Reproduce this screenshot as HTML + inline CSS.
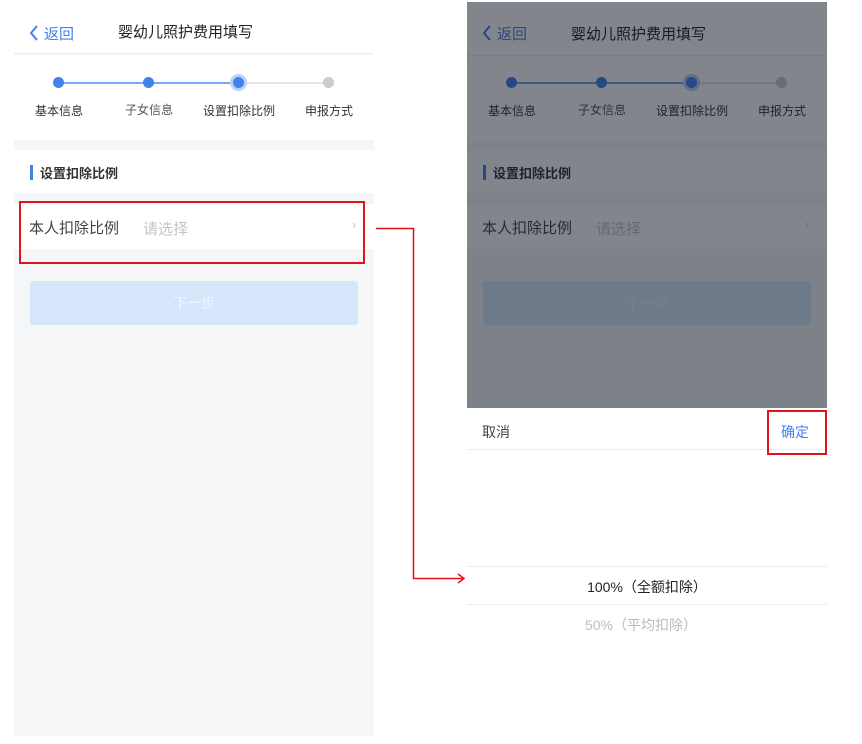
<!DOCTYPE html>
<html><head><meta charset="utf-8"><style>
*{margin:0;padding:0;box-sizing:border-box}
body{width:862px;height:744px;background:#fff;position:relative;overflow:hidden;font-family:"Liberation Sans","Noto Sans CJK SC",sans-serif;}
.scr{position:absolute;width:360px;background:#f5f6f8;overflow:hidden}
.a{position:absolute}
.hdr{left:0;top:0;width:360px;height:54px;background:#fff;border-bottom:1px solid #ececec}
.back{left:30px;top:23px;font-size:15px;color:#3f82ee}
.title{left:104px;top:21px;font-size:15px;color:#222}
.steps{left:0;top:55px;width:360px;height:85px;background:#fff}
.dot{width:11px;height:11px;border-radius:50%;background:#3f82ee}
.lab{font-size:12px;color:#333;width:90px;text-align:center}
</style></head><body>

<div class="scr" style="left:14px;top:0;height:736px">
 <div class="a hdr"></div>
 <svg class="a" style="left:14px;top:24px" width="12" height="18"><path d="M9 2L3 9L9 16" fill="none" stroke="#3f82ee" stroke-width="2"/></svg>
 <div class="a back">返回</div>
 <div class="a title">婴幼儿照护费用填写</div>
 <div class="a steps"></div>
 <div class="a" style="left:45px;top:82px;width:90px;height:2px;background:#7aa8f2"></div>
 <div class="a" style="left:135px;top:82px;width:90px;height:2px;background:#7aa8f2"></div>
 <div class="a" style="left:225px;top:82px;width:90px;height:2px;background:#e4e4e4"></div>
 <div class="a dot" style="left:39px;top:77px"></div>
 <div class="a dot" style="left:129px;top:77px"></div>
 <div class="a dot" style="left:216px;top:74px;width:17px;height:17px;border:3px solid #b9d2f8"></div>
 <div class="a dot" style="left:309px;top:77px;background:#ccc"></div>
 <div class="a lab" style="left:0px;top:102px">基本信息</div>
 <div class="a lab" style="left:90px;top:101px;color:#555">子女信息</div>
 <div class="a lab" style="left:180px;top:102px">设置扣除比例</div>
 <div class="a lab" style="left:270px;top:102px">申报方式</div>
 <div class="a" style="left:0;top:150px;width:360px;height:43px;background:#fff"></div>
 <div class="a" style="left:16px;top:165px;width:3px;height:15px;background:#3f82ee"></div>
 <div class="a" style="left:26px;top:163px;font-size:13px;font-weight:bold;color:#333">设置扣除比例</div>
 <div class="a" style="left:0;top:204px;width:360px;height:45px;background:#fff"></div>
 <div class="a" style="left:15px;top:217px;font-size:15px;color:#444">本人扣除比例</div>
 <div class="a" style="left:129px;top:218px;font-size:15px;color:#c5c5c5">请选择</div>
 <div class="a" style="left:338px;top:217px;font-size:13px;color:#ccc">&#8250;</div>
 <div class="a" style="left:16px;top:281px;width:328px;height:44px;background:#d6e7fb;border-radius:3px;color:#eef5ff;font-size:14px;text-align:center;line-height:44px">下一步</div>
</div>

<div class="scr" style="left:467px;top:2px;height:718px">
 <div class="a hdr"></div>
 <svg class="a" style="left:14px;top:22px" width="12" height="18"><path d="M9 2L3 9L9 16" fill="none" stroke="#3f82ee" stroke-width="2"/></svg>
 <div class="a back" style="top:21px">返回</div>
 <div class="a title">婴幼儿照护费用填写</div>
 <div class="a steps"></div>
 <div class="a" style="left:45px;top:80px;width:90px;height:2px;background:#7aa8f2"></div>
 <div class="a" style="left:135px;top:80px;width:90px;height:2px;background:#7aa8f2"></div>
 <div class="a" style="left:225px;top:80px;width:90px;height:2px;background:#e4e4e4"></div>
 <div class="a dot" style="left:39px;top:75px"></div>
 <div class="a dot" style="left:129px;top:75px"></div>
 <div class="a dot" style="left:216px;top:72px;width:17px;height:17px;border:3px solid #b9d2f8"></div>
 <div class="a dot" style="left:309px;top:75px;background:#ccc"></div>
 <div class="a lab" style="left:0px;top:100px">基本信息</div>
 <div class="a lab" style="left:90px;top:99px;color:#555">子女信息</div>
 <div class="a lab" style="left:180px;top:100px">设置扣除比例</div>
 <div class="a lab" style="left:270px;top:100px">申报方式</div>
 <div class="a" style="left:0;top:148px;width:360px;height:43px;background:#fff"></div>
 <div class="a" style="left:16px;top:163px;width:3px;height:15px;background:#3f82ee"></div>
 <div class="a" style="left:26px;top:161px;font-size:13px;font-weight:bold;color:#333">设置扣除比例</div>
 <div class="a" style="left:0;top:202px;width:360px;height:45px;background:#fff"></div>
 <div class="a" style="left:15px;top:215px;font-size:15px;color:#444">本人扣除比例</div>
 <div class="a" style="left:129px;top:216px;font-size:15px;color:#c5c5c5">请选择</div>
 <div class="a" style="left:338px;top:215px;font-size:13px;color:#ccc">&#8250;</div>
 <div class="a" style="left:16px;top:279px;width:328px;height:44px;background:#d6e7fb;border-radius:3px;color:#eef5ff;font-size:14px;text-align:center;line-height:44px">下一步</div>
 <div class="a" style="left:0;top:0;width:360px;height:406px;background:rgba(15,22,32,0.52)"></div>
 <div class="a" style="left:0;top:406px;width:360px;height:312px;background:#fff"></div>
 <div class="a" style="left:0;top:447px;width:360px;height:1px;background:#eee"></div>
 <div class="a" style="left:15px;top:420px;font-size:14px;color:#444">取消</div>
 <div class="a" style="left:314px;top:420px;font-size:14px;color:#3f82ee">确定</div>
 <div class="a" style="left:0;top:564px;width:360px;height:1px;background:#eee"></div>
 <div class="a" style="left:0;top:602px;width:360px;height:1px;background:#eee"></div>
 <div class="a" style="left:0;top:575px;width:360px;text-align:center;font-size:14px;color:#222">100%（全额扣除）</div>
 <div class="a" style="left:-6px;top:613px;width:360px;text-align:center;font-size:14px;color:#bbb">50%（平均扣除）</div>
</div>

<div class="a" style="left:19px;top:201px;width:346px;height:63px;border:2px solid #e0121b"></div>
<div class="a" style="left:767px;top:410px;width:60px;height:45px;border:2px solid #e0121b"></div>
<svg class="a" style="left:0;top:0" width="862" height="744"><path d="M376 228.5H413.5V578.5H463" fill="none" stroke="#e0121b" stroke-width="1.5"/><path d="M458 574L464 578.5L458 583" fill="none" stroke="#e0121b" stroke-width="1.5"/></svg>
</body></html>
